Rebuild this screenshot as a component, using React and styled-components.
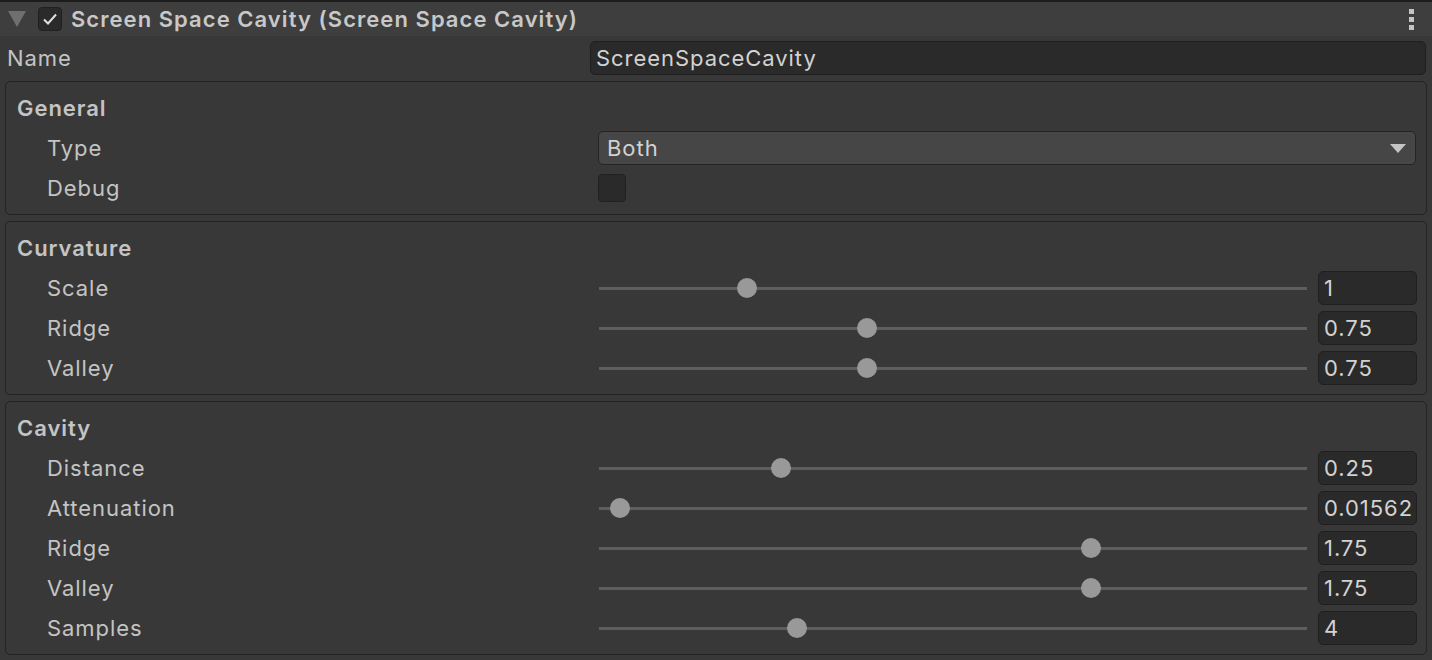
import React from 'react';
import styled, { createGlobalStyle } from 'styled-components';

const GlobalStyle = createGlobalStyle`
  html, body {
    margin: 0;
    padding: 0;
    background: #333333;
  }
  body {
    font-family: Inter, "Noto Sans", sans-serif;
    color: #c4c4c4;
    font-size: 22px;
    letter-spacing: 0.95px;
  }
`;

const Inspector = styled.div`
  width: 1432px;
  height: 660px;
  overflow: hidden;
  background: #383838;
`;

const Header = styled.div`
  height: 34px;
  border-top: 2px solid #1c1c1c;
  background: #3e3e3e;
  display: flex;
  align-items: center;
  padding: 0 18px 0 8px;
`;

const Foldout = styled.div`
  width: 0;
  height: 0;
  border-left: 9px solid transparent;
  border-right: 9px solid transparent;
  border-top: 16px solid #6f6f6f;
  margin-right: 12px;
`;

const Toggle = styled.div`
  width: ${p => p.size}px;
  height: ${p => p.size}px;
  box-sizing: border-box;
  background: #2a2a2a;
  border: 1px solid #202020;
  border-radius: 4px;
  display: flex;
  align-items: center;
  justify-content: center;
`;

const Title = styled.div`
  flex: 1;
  margin-left: 9px;
  font-weight: 600;
  letter-spacing: 1.05px;
  color: #c8c8c8;
  white-space: nowrap;
`;

const Kebab = styled.div`
  display: flex;
  flex-direction: column;
  gap: 3px;
  span {
    width: 5px;
    height: 5px;
    background: #c4c4c4;
  }
`;

const NameRow = styled.div`
  height: 40px;
  margin-top: 2px;
  display: flex;
  align-items: center;
  padding: 0 6px 0 7px;
`;

const NameLabel = styled.div`
  width: 583px;
`;

const TextField = styled.div`
  box-sizing: border-box;
  flex: ${p => (p.grow ? 1 : 'none')};
  width: ${p => (p.grow ? 'auto' : '99px')};
  height: 34px;
  background: #2a2a2a;
  border: 1px solid #1f1f1f;
  border-radius: 5px;
  display: flex;
  align-items: center;
  padding-left: 5px;
  color: #d2d2d2;
  white-space: nowrap;
  overflow: hidden;
`;

const Panels = styled.div`
  display: flex;
  flex-direction: column;
  gap: 6px;
  padding: 3px 5px 0;
`;

const Panel = styled.section`
  background: #383838;
  border: 1px solid #232323;
  border-radius: 5px;
  padding: 6px 10px 6px 0;
`;

const GroupTitle = styled.div`
  height: 40px;
  display: flex;
  align-items: center;
  padding-left: 11px;
  font-weight: 600;
`;

const Row = styled.div`
  height: 40px;
  display: grid;
  grid-template-columns: 551px 1fr;
  align-items: center;
  padding-left: 41px;
`;

const Dropdown = styled.div`
  box-sizing: border-box;
  height: 34px;
  background: #464646;
  border: 1px solid #242424;
  border-radius: 5px;
  display: flex;
  align-items: center;
  justify-content: space-between;
  padding: 0 9px 0 8px;
  color: #d2d2d2;
`;

const Arrow = styled.div`
  width: 0;
  height: 0;
  border-left: 8px solid transparent;
  border-right: 8px solid transparent;
  border-top: 9px solid #c4c4c4;
`;

const SliderWrap = styled.div`
  display: flex;
  align-items: center;
  gap: 11px;
  padding-left: 1px;
  margin-right: -1px;
`;

const Track = styled.div`
  position: relative;
  flex: 1;
  height: 3px;
  background: #5e5e5e;
`;

const Thumb = styled.div`
  position: absolute;
  top: -9px;
  width: 20px;
  height: 20px;
  border-radius: 50%;
  background: #999999;
`;

const Slider = ({ value, frac }) => (
  <SliderWrap>
    <Track>
      <Thumb style={{ left: `calc(${frac} * (100% - 20px))` }} />
    </Track>
    <TextField>{value}</TextField>
  </SliderWrap>
);

const curvature = [
  { label: 'Scale', value: '1', frac: 0.2 },
  { label: 'Ridge', value: '0.75', frac: 0.375 },
  { label: 'Valley', value: '0.75', frac: 0.375 },
];

const cavity = [
  { label: 'Distance', value: '0.25', frac: 0.25 },
  { label: 'Attenuation', value: '0.01562', frac: 0.0156 },
  { label: 'Ridge', value: '1.75', frac: 0.7 },
  { label: 'Valley', value: '1.75', frac: 0.7 },
  { label: 'Samples', value: '4', frac: 0.2727 },
];

const Check = () => (
  <svg width="16" height="14" viewBox="0 0 16 14">
    <path d="M2 7.5 L6 11.5 L14 2.5" fill="none" stroke="#e0e0e0" strokeWidth="2" />
  </svg>
);

export default function App() {
  return (
    <>
      <GlobalStyle />
      <Inspector>
        <Header>
          <Foldout />
          <Toggle size={24}><Check /></Toggle>
          <Title>Screen Space Cavity (Screen Space Cavity)</Title>
          <Kebab><span /><span /><span /></Kebab>
        </Header>
        <NameRow>
          <NameLabel>Name</NameLabel>
          <TextField grow>ScreenSpaceCavity</TextField>
        </NameRow>
        <Panels>
          <Panel>
            <GroupTitle>General</GroupTitle>
            <Row>
              <span>Type</span>
              <Dropdown>Both<Arrow /></Dropdown>
            </Row>
            <Row>
              <span>Debug</span>
              <Toggle size={28} />
            </Row>
          </Panel>
          <Panel>
            <GroupTitle>Curvature</GroupTitle>
            {curvature.map(item => (
              <Row key={item.label}>
                <span>{item.label}</span>
                <Slider value={item.value} frac={item.frac} />
              </Row>
            ))}
          </Panel>
          <Panel>
            <GroupTitle>Cavity</GroupTitle>
            {cavity.map(item => (
              <Row key={item.label}>
                <span>{item.label}</span>
                <Slider value={item.value} frac={item.frac} />
              </Row>
            ))}
          </Panel>
        </Panels>
      </Inspector>
    </>
  );
}
